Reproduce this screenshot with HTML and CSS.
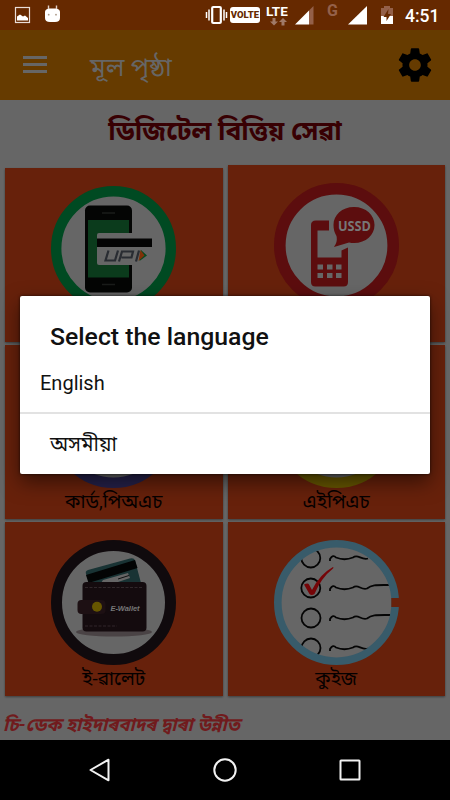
FILE: index.html
```
<!DOCTYPE html>
<html lang="as">
<head>
<meta charset="utf-8">
<title>ডিজিটেল বিত্তিয় সেৱা</title>
<link rel="stylesheet" href="styles.css">
</head>
<body>
<div class="screen">
  <header class="status">
    <svg class="status-left" width="70" height="30" viewBox="0 0 70 30">
      <rect x="15.500" y="7.500" width="14" height="15" fill="none" stroke="#e9ddd8" stroke-width="1.200"/>
      <path d="M17 20.500v-4l3-2 3 2 2-1 3 2.500v2.500z" fill="#fff"/>
      <path d="M45 12q0-3 4-3.500h7q4 .500 4 3.500v6q0 4-5 4h-5q-5 0-5-4z" fill="#fff"/>
      <path d="M48.500 9V5.500M56.500 9V5.500" stroke="#e0cfc7" stroke-width="1.400"/>
      <circle cx="48.700" cy="14.700" r=".9" fill="#a98"/><circle cx="56" cy="14.700" r=".9" fill="#a98"/>
    </svg>
    <div class="status-right">
      <svg width="26" height="30" viewBox="0 0 26 30">
        <rect x="8.200" y="7" width="8.600" height="16" rx="1" fill="none" stroke="#fff" stroke-width="2.200"/>
        <path d="M5 9.500v11M2.500 12v6M20 9.500v11M22.500 12v6" stroke="#fff" stroke-width="1.500"/>
      </svg>
      <span class="volte">VOLTE</span>
      <span class="lte">LTE
        <svg width="18" height="8" viewBox="0 0 18 8"><path d="M3.500 0h3v3.500H9L5 7.500 1 3.500h2.500zM12.500 7.500h3V4H18L14 0 10 4h2.500z" fill="#a07a68"/></svg>
      </span>
      <svg class="signal" width="19" height="30" viewBox="0 0 19 30"><path d="M0 24.500 14 10.500 14 24.500z" fill="#fff"/><path d="M14 10.500 18.500 6v18.500H14z" fill="#946049"/></svg>
      <span class="g">G</span>
      <svg class="signal2" width="19" height="30" viewBox="0 0 19 30"><path d="M0 24.500 19 6v18.500z" fill="#fff"/></svg>
      <svg class="battery" width="12" height="30" viewBox="0 0 12 30"><path d="M0 8h3V6h6v2h3v8H0z" fill="#946049"/><path d="M0 16h12v8H0z" fill="#fff"/><path d="M7.500 9 2.500 17h3v4l4.500-7H7z" fill="#662900"/></svg>
      <span class="clock">4:51</span>
    </div>
  </header>

  <nav class="appbar">
    <span class="burger"><i></i><i></i><i></i></span>
    <span class="apptitle">মূল পৃষ্ঠা</span>
    <svg class="gear" width="40" height="40" viewBox="0 0 24 24"><path fill="#000" d="M19.430 12.980c.040-.320.070-.640.070-.980s-.030-.660-.070-.980l2.110-1.650c.190-.150.240-.420.120-.640l-2-3.460c-.120-.220-.390-.300-.610-.220l-2.490 1c-.520-.400-1.080-.730-1.690-.980l-.380-2.650C14.460 2.180 14.250 2 14 2h-4c-.250 0-.460.180-.490.420l-.380 2.650c-.610.250-1.170.590-1.690.980l-2.490-1c-.230-.090-.490 0-.610.220l-2 3.460c-.130.220-.070.490.120.640l2.110 1.650c-.040.320-.070.650-.070.980s.030.660.070.980l-2.110 1.650c-.190.150-.240.420-.120.640l2 3.460c.120.220.390.300.610.220l2.490-1c.520.400 1.080.730 1.690.980l.380 2.650c.030.240.240.420.490.420h4c.250 0 .460-.180.490-.420l.380-2.650c.610-.250 1.170-.590 1.690-.980l2.490 1c.230.090.490 0 .610-.220l2-3.460c.120-.220.070-.490-.120-.640l-2.110-1.650zM12 15.500c-1.930 0-3.500-1.570-3.500-3.500s1.570-3.500 3.500-3.500 3.500 1.570 3.500 3.500-1.570 3.500-3.500 3.500z"/></svg>
  </nav>

  <main class="content">
    <h1 class="heading">ডিজিটেল বিত্তিয় সেৱা</h1>
    <div class="columns">
      <div class="column left">
        <section class="tile">
          <svg width="125" height="125" viewBox="0 0 125 125">
            <circle cx="62.500" cy="62.500" r="57.300" fill="#666" stroke="#004a22" stroke-width="10.400"/>
            <rect x="34" y="19.500" width="47" height="87" rx="5" fill="#040504"/>
            <rect x="37" y="34" width="41" height="57.500" fill="#0b3b1c"/>
            <path d="M51 27h13M51 98.500h13" stroke="#1a1c1a" stroke-width="1.500"/>
            <path d="M48 47h54v32H48q-2 0-2-2V49q0-2 2-2z" fill="#666"/>
            <rect x="46" y="52.500" width="55" height="8.500" fill="#040404"/>
            <path d="M57.500 64.500 54.500 74.500h9.500l3-10M68 75.500 71 65.500h11l-1.500 6h-10M88 64.500 85 75.500" fill="none" stroke="#292c32" stroke-width="2.200"/>
            <path d="m90 64 6 5.500-7.500 5.500z" fill="#064a20"/><path d="m89.500 64 4 5.500-6 5.500z" fill="#803108"/>
          </svg>
        </section>
        <section class="tile">
          <svg width="125" height="125" viewBox="0 0 125 125"><circle cx="62.500" cy="62.500" r="57.300" fill="#666" stroke="#25214a" stroke-width="10.400"/></svg>
          <span class="label">কার্ড,পিঅএচ</span>
        </section>
        <section class="tile">
          <svg width="125" height="125" viewBox="0 0 125 125">
            <circle cx="62.500" cy="62.500" r="57" fill="#666" stroke="#100a0d" stroke-width="11"/>
            <ellipse cx="63" cy="92" rx="38" ry="4.500" fill="#4a4345"/>
            <path d="m35 34q-1-3 2-4L79 18.500q4-1 5 2L90 43 39 45z" fill="#193334"/>
            <path d="m35 35 49-15 2.500 8-49 15z" fill="#030404"/>
            <path d="m52 40 25-7 2 5-15 5H50z" fill="#666"/><path d="m67 39 11-3.500" stroke="#111" stroke-width="1"/>
            <rect x="31.500" y="42" width="64" height="49.500" rx="4" fill="#140b0e"/>
            <path d="M34 47.500h58M34 86h32" stroke="#30272a" stroke-width="1" stroke-dasharray="3 1.500"/>
            <rect x="26.500" y="60" width="28" height="14" rx="4" fill="#1d1013"/>
            <circle cx="46" cy="66.700" r="5" fill="#665600"/>
            <text class="wallet-text" x="59.500" y="70.500" textLength="29">E-Wallet</text>
          </svg>
          <span class="label">ই-ৱালেট</span>
        </section>
      </div>
      <div class="column right">
        <section class="tile tall">
          <svg width="125" height="125" viewBox="0 0 125 125">
            <circle cx="62.500" cy="62.500" r="56.700" fill="#666" stroke="#5c0d0e" stroke-width="11.600"/>
            <path d="M42 37.500h13v10H43.500v27H67.500v-7l6.500-3V99q0 4.500-4.500 4.500H41.500q-4.500 0-4.500-4.500V42q0-4.500 5-4.500z" fill="#5c0d0e"/>
            <path d="M43.500 81.500h5.500v5h-5.500zM53 81.500h5.500v5H53zM62 81.500h5.500v5H62zM43.500 90h5.500v5h-5.500zM53 90h5.500v5H53zM62 90h5.500v5H62z" fill="#666"/>
            <path d="M80 24c12 0 20.500 8 20.500 18S92 60 80 60c-2 0-3 0-5-.500L60 64c2-3 3.500-6 2.500-11-2-3-3-7-3-11 0-10 8.500-18 20.500-18z" fill="#5c0d0e"/>
            <text class="ussd-text" x="64" y="47.500" textLength="33" lengthAdjust="spacingAndGlyphs">USSD</text>
          </svg>
        </section>
        <section class="tile">
          <svg width="125" height="125" viewBox="0 0 125 125"><circle cx="62.500" cy="62.500" r="57.300" fill="#666" stroke="#665600" stroke-width="10.400"/></svg>
          <span class="label">এইপিএচ</span>
        </section>
        <section class="tile">
          <svg width="125" height="125" viewBox="0 0 125 125">
            <defs><clipPath id="disc"><circle cx="62.500" cy="62.500" r="55"/></clipPath></defs>
            <circle cx="62.500" cy="62.500" r="58.700" fill="#666" stroke="#385b6a" stroke-width="7.600"/>
            <rect x="117.300" y="58" width="8" height="9" fill="#67210b"/>
            <g clip-path="url(#disc)" fill="none" stroke="#050505" stroke-width="1.800">
              <circle cx="36.800" cy="18" r="9.500"/><circle cx="36.800" cy="48" r="9.500"/><circle cx="37" cy="78" r="9.500"/><circle cx="37" cy="108" r="9.500"/>
              <path d="M56 21v-2q3-5 6-1.500c6 2.500 12 2 17 0 5-4 8 3 15 1"/>
              <path d="M56 51v-2q3-5 6-1.500c6 2.500 12 2 17 0 5-4 8 3 14 1 5-4 10-3.500 22-3.500M56 81v-2q3-5 6-1.500c6 2.500 12 2 17 0 5-4 8 3 14 1 5-4 10-3.500 23-3.500M56 111v-2q3-5 6-1.500c6 2.500 12 2 17 0 5-4 8 3 15 1"/>
            </g>
            <path d="M30 44.500q4-2 5 0l3 5.500Q46 34 59 27q1 .500 0 1.500Q47 38 40.500 54q-3 2-5 0z" fill="#750508"/>
          </svg>
          <span class="label">কুইজ</span>
        </section>
      </div>
    </div>
    <p class="credit">চি-ডেক হাইদাৰবাদৰ দ্বাৰা উন্নীত</p>
  </main>

  <footer class="navbar">
    <svg width="24" height="26" viewBox="0 0 24 26"><path d="M2.500 13 20.500 2.700v20.600z" fill="none" stroke="#f2f2f2" stroke-width="2" stroke-linejoin="round"/></svg>
    <svg width="24" height="26" viewBox="0 0 24 26"><circle cx="12" cy="13" r="10.700" fill="none" stroke="#f2f2f2" stroke-width="2"/></svg>
    <svg width="24" height="26" viewBox="0 0 24 26"><rect x="2.500" y="3.500" width="19" height="19" rx=".5" fill="none" stroke="#f2f2f2" stroke-width="2"/></svg>
  </footer>

  <div class="dialog" role="dialog">
    <h2 class="dialog-title">Select the language</h2>
    <div class="option first"><span>English</span></div>
    <div class="option second"><span>অসমীয়া</span></div>
  </div>
</div>
</body>
</html>
```
FILE: styles.css
```
* { box-sizing: border-box; margin: 0; padding: 0; }
body { width: 450px; height: 800px; overflow: hidden; font-family: Roboto, "Noto Sans", "Noto Sans Bengali", sans-serif; }
svg { display: block; flex: none; }
.screen { position: relative; width: 450px; height: 800px; display: flex; flex-direction: column; background: #666; }
.status { height: 30px; flex: none; background: #662900; display: flex; justify-content: space-between; color: #fff; }
.status-right { display: flex; align-items: center; padding-right: 11px; }
.volte { width: 30px; height: 16px; border-radius: 3px; background: #fff; color: #662900; font: 900 9.500px/16px Roboto, sans-serif; text-align: center; }
.lte { width: 24px; margin-left: 6px; height: 21px; font: 700 13.500px/13px Roboto, sans-serif; }
.lte svg { margin-left: 3px; }
.signal { margin-left: 5px; }
.g { width: 12px; margin: -8px 0 0 13px; color: #946049; font: 700 16px/18px Roboto, sans-serif; }
.signal2 { margin-left: 9px; }
.battery { margin-left: 14px; }
.clock { margin-left: 12px; width: 34px; padding-top: 1px; font: 500 17.500px/30px Roboto, sans-serif; white-space: nowrap; }
.appbar { height: 70px; flex: none; background: #663b00; display: flex; align-items: center; padding: 0 15px 0 23px; }
.burger { width: 24px; height: 17px; display: flex; flex-direction: column; justify-content: space-between; margin-top: -1px; }
.burger i { height: 3px; background: #666; }
.apptitle { margin-left: 43px; padding-top: 3px; flex: 1; font-size: 25.600px; line-height: 40px; color: #666; white-space: nowrap; }
.content { height: 640px; flex: none; background: #666; display: flex; flex-direction: column; }
.heading { height: 65px; padding-top: 11px; text-align: center; font-size: 26.400px; line-height: 40px; font-weight: 700; color: #380003; white-space: nowrap; }
.columns { height: 532px; display: flex; justify-content: space-between; padding: 0 5px; }
.column { width: 217.500px; display: flex; flex-direction: column; gap: 3px; }
.column.left { padding-top: 3px; }
.tile { height: 174px; flex: none; padding-top: 18px; background: #67210b; box-shadow: 0 1px 2px rgba(0,0,0,.4); display: flex; flex-direction: column; align-items: center; }
.tile.tall { height: 177px; }
.label { font-size: 19px; line-height: 28px; color: #050000; white-space: nowrap; }
.credit { padding: 13px 0 0 3px; font-size: 18.500px; line-height: 30px; font-weight: 700; font-style: italic; color: #701b1d; white-space: nowrap; }
.wallet-text { font: italic 700 7.500px "Liberation Sans", sans-serif; fill: #777; }
.ussd-text { font: 700 13.500px "Open Sans", sans-serif; fill: #777; }
.navbar { height: 60px; flex: none; background: #000; display: flex; align-items: center; justify-content: space-between; padding: 0 88px; }
.dialog { position: absolute; left: 20px; top: 296px; width: 410px; height: 178px; border-radius: 2px; background: #fff; color: #111; box-shadow: 0 8px 20px rgba(0,0,0,.5), 0 0 3px rgba(0,0,0,.7); display: flex; flex-direction: column; }
.dialog-title { height: 57px; padding: 21px 30px 0; font: 500 24.800px/40px Roboto, sans-serif; white-space: nowrap; }
.option { height: 61px; font-size: 20px; line-height: 60px; white-space: nowrap; }
.first { padding-left: 20px; border-bottom: 2px solid #e2e2e2; }
.second { padding-left: 30px; font-size: 20.400px; }
```
